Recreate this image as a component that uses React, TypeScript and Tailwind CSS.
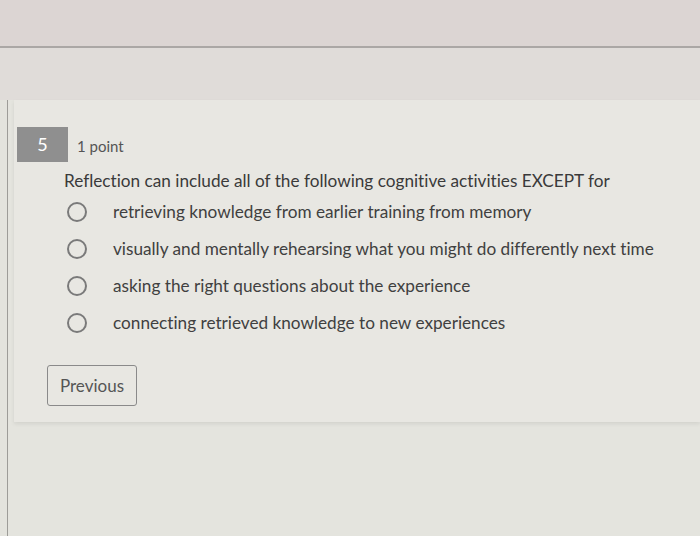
import React from "react";

const options = [
  "retrieving knowledge from earlier training from memory",
  "visually and mentally rehearsing what you might do differently next time",
  "asking the right questions about the experience",
  "connecting retrieved knowledge to new experiences",
];

export default function App() {
  return (
    <div
      className="w-[700px] h-[536px] overflow-hidden flex flex-col bg-[#e4e4de] [font-variant-ligatures:none]"
      style={{ fontFamily: "Lato, 'Open Sans', sans-serif" }}
    >
      <div className="h-[46px] shrink-0 bg-[#dcd5d3]" />
      <div className="h-[2px] shrink-0 bg-[#aba7a5]" />
      <div className="h-[52px] shrink-0 bg-[#e0dcd9]" />
      <div className="flex flex-1">
        <div className="w-[7px] shrink-0 bg-[#e3e3dd]" />
        <div className="w-px shrink-0 bg-[#9d9c98]" />
        <div className="flex-1 pl-[6px]">
          <div className="bg-[#e8e7e2] shadow-[0_2px_4px_rgba(0,0,0,0.08)] pt-[27px] pb-[16px] pl-[3px]">
            <div className="flex items-center">
              <div className="w-[51px] h-[35px] bg-[#8f8f8f] flex items-center justify-center text-white text-[18px]">
                5
              </div>
              <div className="ml-[9px] mt-[4px] text-[15px] text-[#555555]">1 point</div>
            </div>
            <div className="ml-[47px] mt-[7px] text-[17.2px] leading-[24px] text-[#3a3a3a]">
              Reflection can include all of the following cognitive activities EXCEPT for
            </div>
            <div className="ml-[47px] flex flex-col">
              {options.map((o) => (
                <div key={o} className="h-[37px] flex items-center">
                  <div className="ml-[3px] w-[20px] h-[20px] rounded-full border-2 border-[#7a7a7a]" />
                  <div className="ml-[26px] text-[17.2px] text-[#404040]">{o}</div>
                </div>
              ))}
            </div>
            <div className="ml-[30px] mt-[24px] w-[90px] h-[41px] border border-[#8a8a8a] rounded-[3px] flex items-center justify-center text-[17px] text-[#555555]">
              Previous
            </div>
          </div>
        </div>
      </div>
    </div>
  );
}
